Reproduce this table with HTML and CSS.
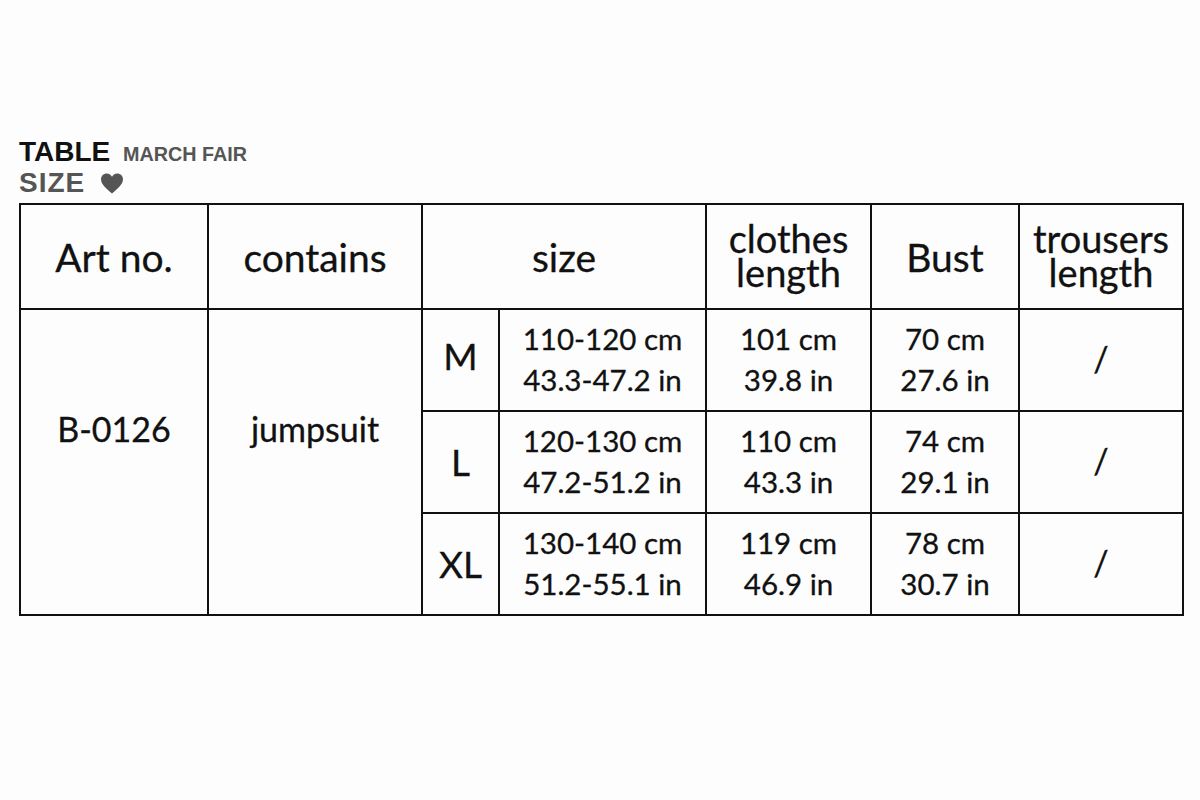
FILE: index.html
```html
<!DOCTYPE html>
<html>
<head>
<meta charset="utf-8">
<link rel="stylesheet" href="styles.css">
</head>
<body>
<div class="page">
  <div class="title">
    <div class="line1"><span class="t-table">TABLE</span><span class="t-march">MARCH FAIR</span></div>
    <div class="line2"><span class="t-size">SIZE</span>
      <svg class="heart" viewBox="0 0 24 22" width="26" height="21"><path d="M12 21.5 C5 15.5 0.5 11.5 0.5 6.5 C0.5 3 3.2 0.5 6.5 0.5 C9 0.5 11 2 12 4 C13 2 15 0.5 17.5 0.5 C20.8 0.5 23.5 3 23.5 6.5 C23.5 11.5 19 15.5 12 21.5 Z" fill="#555"/></svg>
    </div>
  </div>
  <table class="sizes">
    <colgroup>
      <col class="c1"><col class="c2"><col class="c3"><col class="c4"><col class="c5"><col class="c6"><col class="c7">
    </colgroup>
    <tr class="head">
      <th>Art no.</th>
      <th>contains</th>
      <th colspan="2">size</th>
      <th class="two"><span class="ln">clothes</span><span class="ln">length</span></th>
      <th>Bust</th>
      <th class="two"><span class="ln">trousers</span><span class="ln">length</span></th>
    </tr>
    <tr class="row">
      <td rowspan="3" class="span">B-0126</td>
      <td rowspan="3" class="span">jumpsuit</td>
      <td class="sz sz-m">M</td>
      <td>110-120 cm<br>43.3-47.2 in</td>
      <td>101 cm<br>39.8 in</td>
      <td>70 cm<br>27.6 in</td>
      <td class="slash">/</td>
    </tr>
    <tr class="row">
      <td class="sz">L</td>
      <td>120-130 cm<br>47.2-51.2 in</td>
      <td>110 cm<br>43.3 in</td>
      <td>74 cm<br>29.1 in</td>
      <td class="slash">/</td>
    </tr>
    <tr class="row">
      <td class="sz">XL</td>
      <td>130-140 cm<br>51.2-55.1 in</td>
      <td>119 cm<br>46.9 in</td>
      <td>78 cm<br>30.7 in</td>
      <td class="slash">/</td>
    </tr>
  </table>
</div>
</body>
</html>
```

FILE: styles.css
```css
html, body {
  margin: 0;
  padding: 0;
  background: #fdfdfd;
}
.page {
  width: 1200px;
  height: 800px;
  padding: 136px 0 0 19px;
  box-sizing: border-box;
  font-family: Lato, "Open Sans", sans-serif;
  color: #111;
}
.title {
  font-family: "Liberation Sans", Arial, sans-serif;
  font-weight: bold;
}
.line1, .line2 {
  display: flex;
  align-items: baseline;
  height: 31px;
  line-height: 31px;
}
.t-table {
  font-size: 28px;
  color: #111;
}
.t-march {
  font-size: 21px;
  color: #555;
  margin-left: 13px;
  transform: scaleX(0.94);
  transform-origin: left;
}
.t-size {
  font-size: 28px;
  letter-spacing: 1px;
  color: #555;
}
.heart {
  margin-left: 14px;
  align-self: center;
  position: relative;
  top: 1px;
}
.sizes {
  margin-top: 5px;
  border-collapse: collapse;
  table-layout: fixed;
  width: 1163px;
}
.c1 { width: 188px; }
.c2 { width: 214px; }
.c3 { width: 77px; }
.c4 { width: 207px; }
.c5 { width: 165px; }
.c6 { width: 148px; }
.c7 { width: 164px; }
.sizes th, .sizes td {
  border: 2px solid #111;
  text-align: center;
  vertical-align: middle;
  padding: 0;
  -webkit-text-stroke: 0.3px #111;
}
.head th {
  height: 103px;
  font-size: 39px;
  font-weight: normal;
  line-height: 40px;
}
.head th.two {
  height: 99px;
  font-size: 38px;
  line-height: 34px;
  padding-bottom: 4px;
}
.head th.two .ln {
  display: block;
  height: 34px;
}
.row td {
  height: 97px;
  font-size: 29.5px;
  line-height: 41px;
  padding-bottom: 3px;
}
.row td.span {
  font-size: 34px;
  line-height: 40px;
  padding-bottom: 0;
}
.row td.span::after {
  content: "";
  display: block;
  height: 66px;
}
.row td.sz {
  height: 100px;
  font-size: 37px;
  line-height: 40px;
  padding-bottom: 0;
}
.row td.sz-m {
  height: 92px;
  padding-bottom: 8px;
}
.row td.slash {
  font-size: 34px;
}
```
